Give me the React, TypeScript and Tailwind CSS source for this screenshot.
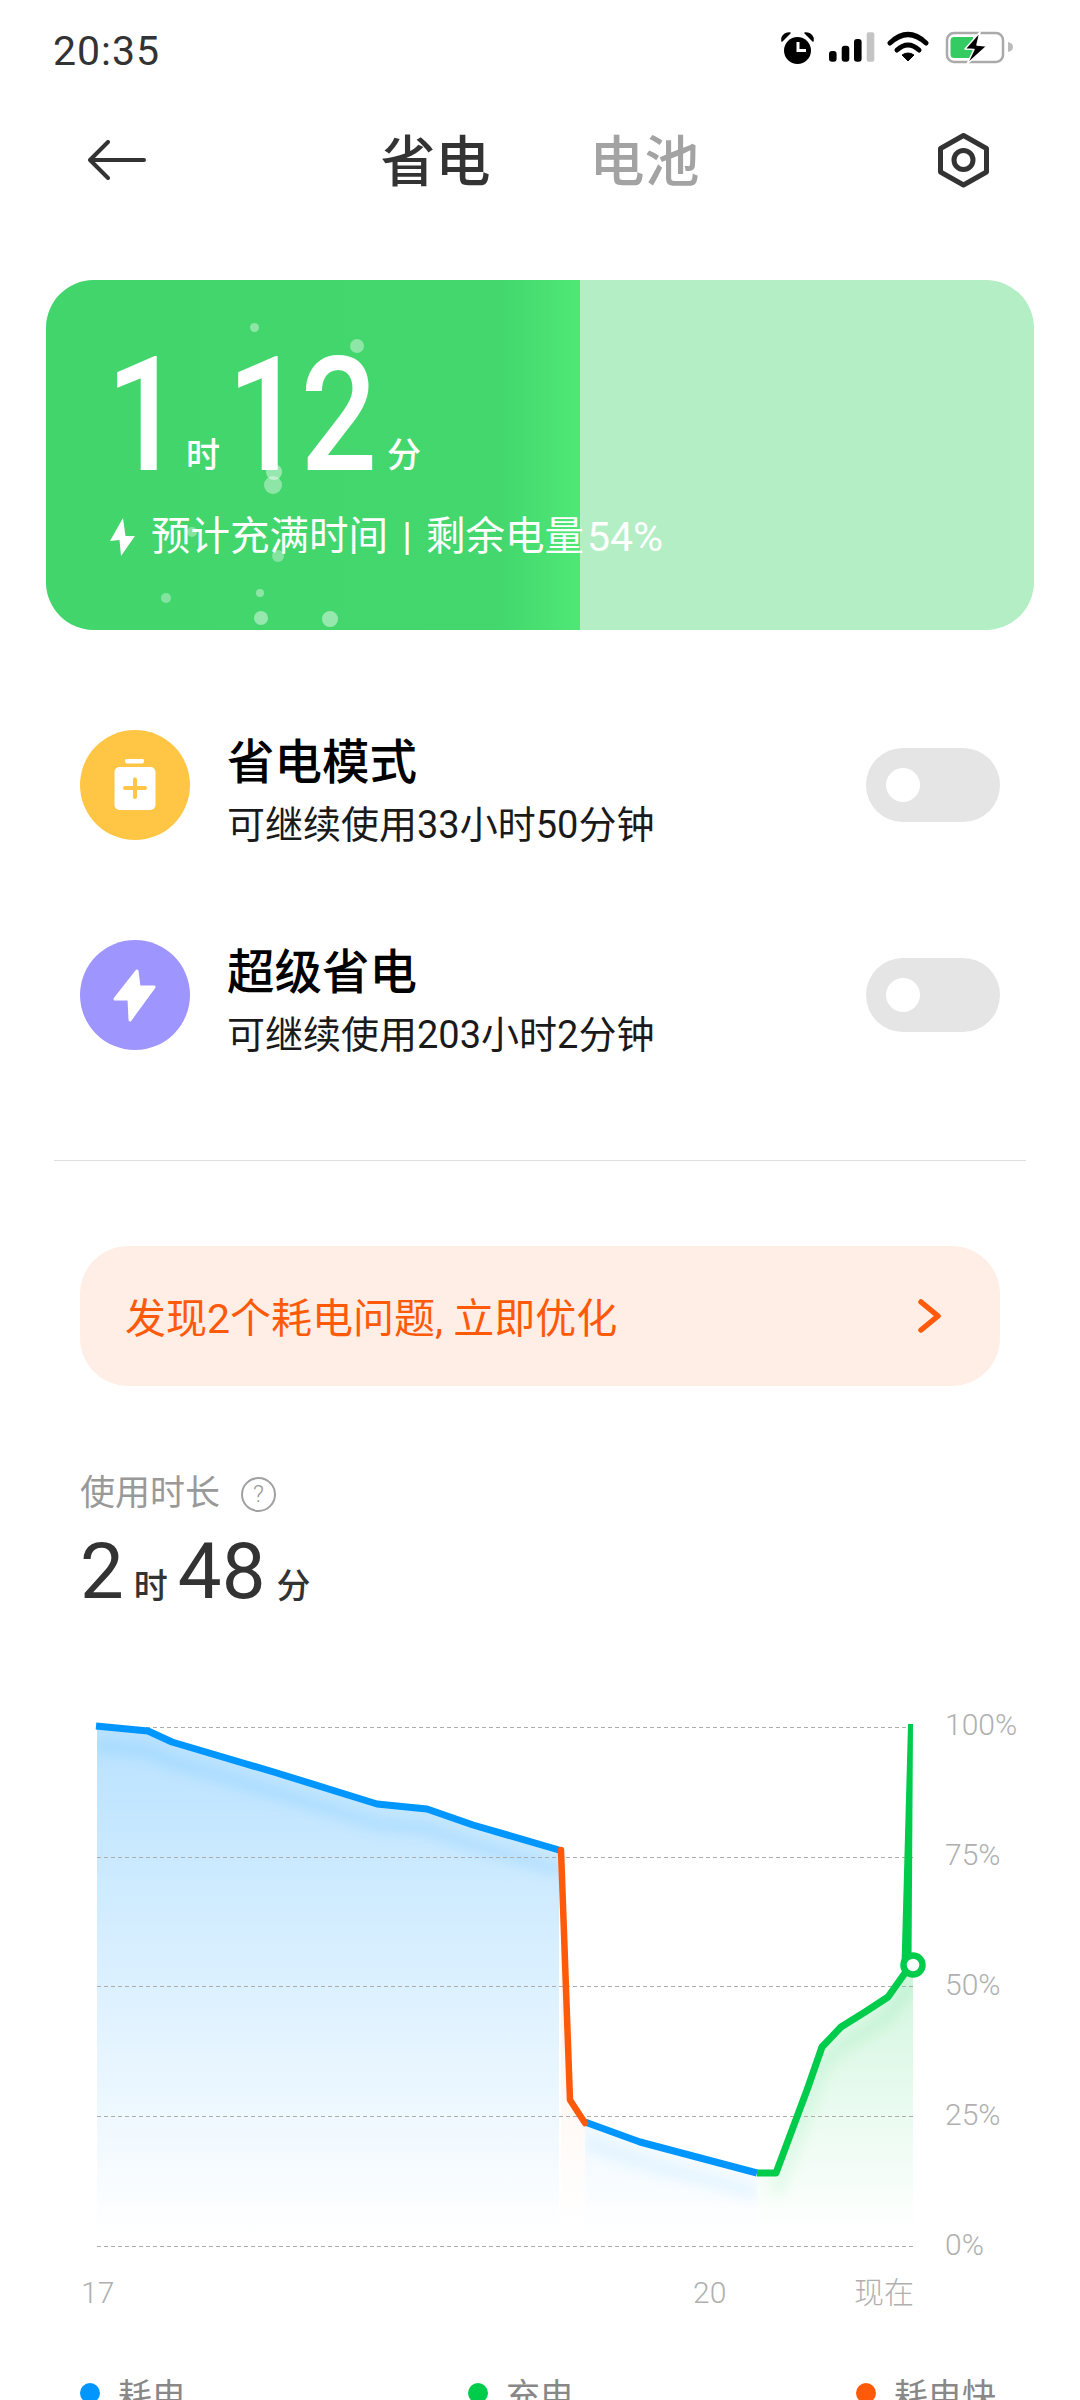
import React from "react";

const bubbles: [number, number, number, number][] = [
  [208, 47, 4.5, 0.4], [311, 66, 7, 0.4], [228, 192, 8, 0.45], [227, 205, 9, 0.4], [146, 252, 5, 0.35],
  [232, 276, 6, 0.35], [120, 318, 5, 0.35], [214, 313, 4, 0.4], [215, 338, 7, 0.45], [284, 339, 8, 0.45],
];

function StatusIcons() {
  return (
    <svg width="240" height="40" viewBox="778 30 240 40" className="block">
      <circle cx="797.5" cy="51.5" r="13.5" fill="#000" />
      <path d="M798 43V51.5H806" fill="none" stroke="#fff" strokeWidth="3" />
      <path d="M782 39Q784 34 790 34L782 42ZM813 39Q811 34 805 34L813 42Z" fill="#000" stroke="#000" strokeWidth="1.5" strokeLinejoin="round" />
      <rect x="829" y="52" width="7.6" height="10.7" rx="3" fill="#000" />
      <rect x="841.7" y="46.7" width="7.6" height="16" rx="3" fill="#000" />
      <rect x="854" y="40" width="7.6" height="22.7" rx="3" fill="#000" />
      <rect x="866.7" y="33.3" width="7.6" height="29.4" rx="2" fill="#c4c4c4" />
      <path d="M890 44Q908 27 926 44" fill="none" stroke="#000" strokeWidth="5" strokeLinecap="round" />
      <path d="M897 51Q908 41 919 51" fill="none" stroke="#000" strokeWidth="5" strokeLinecap="round" />
      <path d="M902 56Q908 52 914 56L908 62Z" fill="#000" stroke="#000" strokeLinejoin="round" />
      <rect x="947" y="34" width="56" height="29" rx="7" fill="#fff" stroke="#aaa" strokeWidth="2.5" />
      <path d="M1008 43Q1013 44 1013 48Q1013 52 1008 53Z" fill="#bbb" />
      <path d="M954 38H973V59H954Q950.5 59 950.5 55V42Q950.5 38 954 38Z" fill="#34cb62" />
      <path d="M980 33L965 50L974 50.5L967 65L987 47L977 46Z" fill="#000" stroke="#fff" strokeWidth="1.5" strokeLinejoin="round" />
    </svg>
  );
}

function ModeRow({ title, sub, icon, color }: { title: string; sub: string; icon: React.ReactNode; color: string }) {
  return (
    <div className="flex h-[110px] items-start pl-[80px] pr-[80px]">
      <div className={`flex h-[110px] w-[110px] shrink-0 items-center justify-center rounded-full ${color}`}>{icon}</div>
      <div className="ml-[37px] flex-1 pt-[9px]">
        <div className="h-[48px] text-[47.5px] font-medium leading-[48px] text-black">{title}</div>
        <div className="mt-[18px] h-[40px] text-[38px] leading-[40px] text-[#1a1a1a]">{sub}</div>
      </div>
      <div className="mt-[18px] flex h-[74px] w-[134px] shrink-0 items-center rounded-full bg-[#e5e5e5] pl-[20px]">
        <div className="h-[34px] w-[34px] rounded-full bg-white" />
      </div>
    </div>
  );
}

function YLabel({ t }: { t: string }) {
  return <div className="flex h-[130px] shrink-0 items-center text-[30px] font-light text-[#b0b0b0]">{t}</div>;
}

function Legend({ t, color }: { t: string; color: string }) {
  return (
    <div className="flex w-[388px] items-start">
      <div className={`mt-[5px] h-[20px] w-[20px] rounded-full ${color}`} />
      <div className="ml-[18px] text-[34px] leading-[36px] text-[#888]">{t}</div>
    </div>
  );
}

const blueA = "96,1726 148,1731 172,1742 277,1773 377,1804 427,1809 473,1825 559,1850";
const blueB = "585,2122 640,2142 757,2173";
const green = "757,2173 776,2173 807,2090 822,2047 841,2027 865,2012 888,1997 905,1973 913,1965";

export default function App() {
  return (
    <div className="relative h-[2400px] w-[1080px] overflow-hidden bg-white font-[Roboto,'Noto_Sans_CJK_SC',sans-serif]">
      {/* status bar */}
      <div className="flex h-[98px] items-center justify-between pl-[53px] pr-[62px]">
        <div className="pt-[3px] text-[41px] leading-[48px] tracking-[1px] text-[#333]">20:35</div>
        <StatusIcons />
      </div>

      {/* header */}
      <div className="flex h-[124px] items-center px-[88px]">
        <svg width="58" height="40" viewBox="88 140 58 40" className="block shrink-0">
          <path d="M108 142L90 160L108 178M90 160H144" fill="none" stroke="#333" strokeWidth="4" strokeLinecap="round" strokeLinejoin="round" />
        </svg>
        <div className="flex flex-1 items-center justify-center gap-[99px] pt-[3px] text-[55px] font-medium leading-[60px]">
          <span className="text-[#333]">省电</span>
          <span className="text-[#a3a3a3]">电池</span>
        </div>
        <svg width="58" height="56" viewBox="935 132 58 56" className="block shrink-0">
          <path d="M964.5 135.5L987.5 148.5V172L964.5 185L941.5 172V148.5Z" fill="none" stroke="#333" strokeWidth="5" strokeLinejoin="round" />
          <circle cx="964.5" cy="160" r="9.5" fill="none" stroke="#333" strokeWidth="5" />
        </svg>
      </div>

      {/* charge card */}
      <div className="relative mx-[46px] mt-[58px] h-[350px] overflow-hidden rounded-[48px] bg-[#b3eec4]">
        <div className="absolute inset-y-0 left-0 w-[534px] bg-[linear-gradient(to_right,#42d56b_0%,#43d76d_85%,#4fe876_100%)]" />
        <div className="relative pl-[60px] pt-[56px] text-white">
          <div className="flex h-[159px] items-baseline">
            <span className="w-[80px] origin-left scale-x-[0.85] text-[159px] font-medium leading-[159px]">1</span>
            <span className="w-[41px] -translate-y-[3px] text-[34px] font-medium leading-[40px]">时</span>
            <span className="w-[160px] origin-left scale-x-[0.85] text-[159px] font-medium leading-[159px] tracking-[-4px]">12</span>
            <span className="-translate-y-[3px] text-[34px] font-medium leading-[40px]">分</span>
          </div>
          <div className="ml-[4px] mt-[22px] flex h-[40px] items-center whitespace-nowrap text-[39.5px] leading-[40px]">
            <svg width="25" height="38" viewBox="110 515 25 38" className="block shrink-0">
              <path d="M123 515L110 538L119.5 537L121 553L135 533L125.5 533Z" fill="#fff" />
            </svg>
            <span className="ml-[16px]">预计充满时间</span>
            <span className="w-[38px] text-center">|</span>
            <span>剩余电量</span>
            <span className="ml-[3px] text-[41px]">54%</span>
          </div>
        </div>
        {bubbles.map(([x, y, r, o], i) => (
          <div
            key={i}
            className="absolute rounded-full bg-white"
            style={{ left: x - r, top: y - r, width: r * 2, height: r * 2, opacity: o }}
          />
        ))}
      </div>

      {/* modes */}
      <div className="mt-[100px] flex flex-col gap-[100px]">
        <ModeRow
          title="省电模式"
          sub="可继续使用33小时50分钟"
          color="bg-[#ffc544]"
          icon={
            <svg width="42" height="52" viewBox="114 760 42 52" className="block">
              <rect x="125" y="759.5" width="19" height="5" rx="2.5" fill="#fff" />
              <rect x="114.5" y="768" width="41" height="43" rx="5" fill="#fff" />
              <path d="M135 780.5V798M125 789H145" stroke="#ffc544" strokeWidth="4" strokeLinecap="round" />
            </svg>
          }
        />
        <ModeRow
          title="超级省电"
          sub="可继续使用203小时2分钟"
          color="bg-[#9f95ff]"
          icon={
            <svg width="44" height="56" viewBox="34 27 44 56" className="block">
              <path d="M58 31L36 59H50L51 80L75 47H60Z" fill="#fff" stroke="#fff" strokeWidth="3" strokeLinejoin="round" />
            </svg>
          }
        />
      </div>

      <div className="mx-[54px] mt-[110px] h-[1px] bg-[#dedede]" />

      {/* warning */}
      <div className="mx-[80px] mt-[85px] flex h-[140px] items-center justify-between rounded-[48px] bg-[#ffeee6] pl-[45px] pr-[58px]">
        <span className="pt-[5px] text-[41px] leading-[44px] text-[#ff5a0a]">发现2个耗电问题, 立即优化</span>
        <svg width="24" height="34" viewBox="918 1299 24 34" className="block">
          <path d="M921 1302L938 1316L921 1330" fill="none" stroke="#ff5a0a" strokeWidth="5.5" strokeLinecap="round" strokeLinejoin="round" />
        </svg>
      </div>

      {/* usage */}
      <div className="ml-[80px] mt-[90px] flex h-[36px] items-center text-[35px] leading-[36px] text-[#999]">
        <span>使用时长</span>
        <span className="ml-[21px] flex h-[35px] w-[35px] items-center justify-center rounded-full border-2 border-[#a0a0a0] text-[24px] font-light leading-none">?</span>
      </div>
      <div className="ml-[80px] mt-[20px] flex h-[80px] items-baseline text-[#333]">
        <span className="text-[78px] leading-[80px]">2</span>
        <span className="ml-[10px] text-[34px] font-medium leading-[36px]">时</span>
        <span className="ml-[10px] text-[78px] leading-[80px]">48</span>
        <span className="ml-[11px] text-[34px] font-medium leading-[36px]">分</span>
      </div>

      {/* chart */}
      <div className="absolute left-[80px] top-[1659px]">
        <div className="flex h-[600px]">
          <svg width="850" height="600" viewBox="80 1659 850 600" className="block shrink-0">
            <defs>
              <linearGradient id="blueFill" gradientUnits="userSpaceOnUse" x1="0" y1="1727" x2="0" y2="2235">
                <stop offset="0" stopColor="#0096ff" stopOpacity="0.28" />
                <stop offset="1" stopColor="#0096ff" stopOpacity="0" />
              </linearGradient>
              <linearGradient id="greenFill" gradientUnits="userSpaceOnUse" x1="0" y1="1970" x2="0" y2="2235">
                <stop offset="0" stopColor="#00cc4b" stopOpacity="0.18" />
                <stop offset="1" stopColor="#00cc4b" stopOpacity="0" />
              </linearGradient>
              <linearGradient id="orangeFill" gradientUnits="userSpaceOnUse" x1="0" y1="2000" x2="0" y2="2225">
                <stop offset="0" stopColor="#ff5a0a" stopOpacity="0.07" />
                <stop offset="1" stopColor="#ff5a0a" stopOpacity="0" />
              </linearGradient>
              <filter id="soft" x="-10%" y="-50%" width="120%" height="200%">
                <feGaussianBlur stdDeviation="6" />
              </filter>
              <clipPath id="blueClip">
                <polygon points={`${blueA} 559,2235 97,2235 97,1726`} />
              </clipPath>
              <clipPath id="blueClipB">
                <polygon points={`${blueB} 757,2235 585,2235`} />
              </clipPath>
              <clipPath id="greenClip">
                <polygon points={`${green} 913,2235 776,2235`} />
              </clipPath>
            </defs>
            <polygon points={`97,1726 ${blueA} 559,2235 97,2235`} fill="url(#blueFill)" />
            <polygon points="561,1850 570,2100 585,2122 585,2225 561,2225" fill="url(#orangeFill)" />
            <polygon points={`${blueB} 757,2235 585,2235`} fill="url(#blueFill)" />
            <polygon points={`${green} 913,2235 757,2235`} fill="url(#greenFill)" />
            <g clipPath="url(#blueClip)">
              <polyline points="96,1746 148,1751 172,1762 277,1793 377,1824 427,1829 473,1845 559,1870" fill="none" stroke="#0096ff" strokeOpacity="0.1" strokeWidth="14" filter="url(#soft)" />
            </g>
            <g clipPath="url(#blueClipB)">
              <polyline points="585,2142 640,2162 757,2193" fill="none" stroke="#0096ff" strokeOpacity="0.07" strokeWidth="14" filter="url(#soft)" />
            </g>
            <g clipPath="url(#greenClip)">
              <polyline points="776,2193 807,2110 822,2067 841,2047 865,2032 888,2017 905,1993 913,1985" fill="none" stroke="#00cc4b" strokeOpacity="0.08" strokeWidth="14" filter="url(#soft)" />
            </g>
            {[1727, 1857, 1986, 2116, 2246].map((y) => (
              <line key={y} x1="97" x2="913" y1={y + 0.5} y2={y + 0.5} stroke="#adadad" strokeWidth="1" strokeDasharray="4 3" />
            ))}
            <polyline points={blueA} fill="none" stroke="#0096ff" strokeWidth="7" strokeLinejoin="round" />
            <polyline points={blueB} fill="none" stroke="#0096ff" strokeWidth="7" strokeLinejoin="round" />
            <polyline points="561,1850 570,2100 585,2123" fill="none" stroke="#ff5a0a" strokeWidth="6.5" strokeLinejoin="round" strokeLinecap="round" />
            <polyline points={green} fill="none" stroke="#00cc4b" strokeWidth="7" strokeLinejoin="round" />
            <path d="M901.5 1965L908 1724H913L911.5 1965Z" fill="#00cc4b" />
            <circle cx="913" cy="1965" r="9.5" fill="#fff" stroke="#00cc4b" strokeWidth="6.5" />
          </svg>
          <div className="ml-[15px] flex flex-col">
            <YLabel t="100%" />
            <YLabel t="75%" />
            <YLabel t="50%" />
            <YLabel t="25%" />
            <YLabel t="0%" />
          </div>
        </div>
        <div className="mt-[17px] flex h-[34px] items-center text-[30px] font-light leading-[34px] text-[#b0b0b0]">
          <span className="w-[613px] pl-[1px]">17</span>
          <span className="w-[161px]">20</span>
          <span>现在</span>
        </div>
        <div className="mt-[68px] flex">
          <Legend t="耗电" color="bg-[#0096ff]" />
          <Legend t="充电" color="bg-[#00cc4b]" />
          <Legend t="耗电快" color="bg-[#ff5a0a]" />
        </div>
      </div>
    </div>
  );
}
